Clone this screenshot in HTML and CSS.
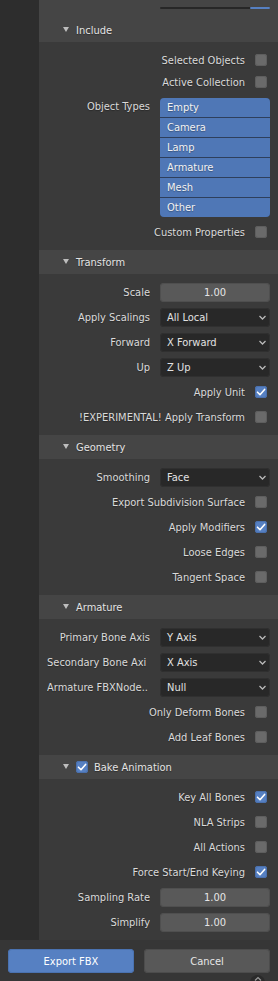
FILE: index.html
```html
<!DOCTYPE html>
<html>
<head>
<meta charset="utf-8">
<link rel="stylesheet" href="styles.css">
</head>
<body>
<div class="app">
  <div class="sidebar"></div>
  <div class="main">
    <div class="topstrip"><div class="topbar"><span class="topbar-fill"></span></div></div>

    <div class="panel-head"><svg class="tri" width="6" height="5" viewBox="0 0 6 5"><polygon points="0,0 6,0 3,5"/></svg><span>Include</span></div>
    <div class="panel panel--tight">
      <div class="crow"><span class="clabel">Selected Objects</span><span class="cb"></span></div>
      <div class="crow"><span class="clabel">Active Collection</span><span class="cb"></span></div>
      <div class="frow frow--list">
        <span class="flabel flabel--top">Object Types</span>
        <div class="list">
          <div class="list-item">Empty</div>
          <div class="list-item">Camera</div>
          <div class="list-item">Lamp</div>
          <div class="list-item">Armature</div>
          <div class="list-item">Mesh</div>
          <div class="list-item">Other</div>
        </div>
      </div>
      <div class="crow"><span class="clabel">Custom Properties</span><span class="cb"></span></div>
    </div>

    <div class="panel-head"><svg class="tri" width="6" height="5" viewBox="0 0 6 5"><polygon points="0,0 6,0 3,5"/></svg><span>Transform</span></div>
    <div class="panel">
      <div class="frow"><span class="flabel">Scale</span><div class="num">1.00</div></div>
      <div class="frow"><span class="flabel">Apply Scalings</span><div class="drop"><span>All Local</span><svg class="chev" width="7" height="5" viewBox="0 0 7 5"><polyline points="0.5,1 3.5,4 6.5,1"/></svg></div></div>
      <div class="frow"><span class="flabel">Forward</span><div class="drop"><span>X Forward</span><svg class="chev" width="7" height="5" viewBox="0 0 7 5"><polyline points="0.5,1 3.5,4 6.5,1"/></svg></div></div>
      <div class="frow"><span class="flabel">Up</span><div class="drop"><span>Z Up</span><svg class="chev" width="7" height="5" viewBox="0 0 7 5"><polyline points="0.5,1 3.5,4 6.5,1"/></svg></div></div>
      <div class="crow"><span class="clabel">Apply Unit</span><span class="cb cb--on"><svg width="12" height="12" viewBox="0 0 12 12"><polyline points="2.5,6.2 5,8.7 9.6,3.4"/></svg></span></div>
      <div class="crow"><span class="clabel">!EXPERIMENTAL! Apply Transform</span><span class="cb"></span></div>
    </div>

    <div class="panel-head"><svg class="tri" width="6" height="5" viewBox="0 0 6 5"><polygon points="0,0 6,0 3,5"/></svg><span>Geometry</span></div>
    <div class="panel">
      <div class="frow"><span class="flabel">Smoothing</span><div class="drop"><span>Face</span><svg class="chev" width="7" height="5" viewBox="0 0 7 5"><polyline points="0.5,1 3.5,4 6.5,1"/></svg></div></div>
      <div class="crow"><span class="clabel">Export Subdivision Surface</span><span class="cb"></span></div>
      <div class="crow"><span class="clabel">Apply Modifiers</span><span class="cb cb--on"><svg width="12" height="12" viewBox="0 0 12 12"><polyline points="2.5,6.2 5,8.7 9.6,3.4"/></svg></span></div>
      <div class="crow"><span class="clabel">Loose Edges</span><span class="cb"></span></div>
      <div class="crow"><span class="clabel">Tangent Space</span><span class="cb"></span></div>
    </div>

    <div class="panel-head"><svg class="tri" width="6" height="5" viewBox="0 0 6 5"><polygon points="0,0 6,0 3,5"/></svg><span>Armature</span></div>
    <div class="panel">
      <div class="frow"><span class="flabel">Primary Bone Axis</span><div class="drop"><span>Y Axis</span><svg class="chev" width="7" height="5" viewBox="0 0 7 5"><polyline points="0.5,1 3.5,4 6.5,1"/></svg></div></div>
      <div class="frow"><span class="flabel flabel--clip">Secondary Bone Axi</span><div class="drop"><span>X Axis</span><svg class="chev" width="7" height="5" viewBox="0 0 7 5"><polyline points="0.5,1 3.5,4 6.5,1"/></svg></div></div>
      <div class="frow"><span class="flabel flabel--clip">Armature FBXNode..</span><div class="drop"><span>Null</span><svg class="chev" width="7" height="5" viewBox="0 0 7 5"><polyline points="0.5,1 3.5,4 6.5,1"/></svg></div></div>
      <div class="crow"><span class="clabel">Only Deform Bones</span><span class="cb"></span></div>
      <div class="crow"><span class="clabel">Add Leaf Bones</span><span class="cb"></span></div>
    </div>

    <div class="panel-head"><svg class="tri" width="6" height="5" viewBox="0 0 6 5"><polygon points="0,0 6,0 3,5"/></svg><span class="cb cb--on cb--head"><svg width="12" height="12" viewBox="0 0 12 12"><polyline points="2.5,6.2 5,8.7 9.6,3.4"/></svg></span><span>Bake Animation</span></div>
    <div class="panel">
      <div class="crow"><span class="clabel">Key All Bones</span><span class="cb cb--on"><svg width="12" height="12" viewBox="0 0 12 12"><polyline points="2.5,6.2 5,8.7 9.6,3.4"/></svg></span></div>
      <div class="crow"><span class="clabel">NLA Strips</span><span class="cb"></span></div>
      <div class="crow"><span class="clabel">All Actions</span><span class="cb"></span></div>
      <div class="crow"><span class="clabel">Force Start/End Keying</span><span class="cb cb--on"><svg width="12" height="12" viewBox="0 0 12 12"><polyline points="2.5,6.2 5,8.7 9.6,3.4"/></svg></span></div>
      <div class="frow"><span class="flabel">Sampling Rate</span><div class="num">1.00</div></div>
      <div class="frow"><span class="flabel">Simplify</span><div class="num">1.00</div></div>
    </div>
  </div>
  <div class="footer">
    <button class="btn btn--primary">Export FBX</button>
    <button class="btn">Cancel</button>
    <span class="corner"><svg width="8" height="5" viewBox="0 0 8 5"><polyline points="1,4.5 4,1.5 7,4.5"/></svg></span>
  </div>
</div>
</body>
</html>
```

FILE: styles.css
```css
* { box-sizing: border-box; }
html, body { margin: 0; padding: 0; }
body {
  width: 278px;
  height: 981px;
  overflow: hidden;
  background: #363636;
  font-family: "DejaVu Sans Condensed", "DejaVu Sans", sans-serif;
  font-stretch: condensed;
  font-size: 11px;
  color: #dadada;
}
.app {
  display: grid;
  grid-template-columns: 39px 239px;
  grid-template-rows: 940px 41px;
  position: relative;
}
.sidebar { background: #2d2d2d; }
.main { background: #3a3a3a; display: flex; flex-direction: column; }
.topstrip {
  height: 18px;
  background: #454545;
  padding: 7px 8px 0 121px;
}
.topbar {
  height: 2px;
  background: #272727;
  border-radius: 1px;
  display: flex;
  justify-content: flex-end;
}
.topbar-fill { width: 20px; background: #5680c2; border-radius: 1px; }

.panel-head {
  height: 24px;
  background: #454545;
  display: flex;
  align-items: center;
  padding-left: 24px;
  color: #e4e4e4;
  text-shadow: 0 1px 1px rgba(0,0,0,0.35);
}
.tri { fill: #bdbdbd; margin-right: 7px; margin-top: -1px; }
.panel {
  display: flex;
  flex-direction: column;
  gap: 5px;
  padding: 8px 8px 8px 8px;
  background: #3a3a3a;
}
.panel--tight { gap: 2px; }
.panel--tight .frow--list { margin: 4px 0 3px; }

.crow {
  height: 20px;
  display: flex;
  align-items: center;
  justify-content: flex-end;
  padding-right: 3px;
  gap: 10px;
}
.clabel { white-space: nowrap; text-shadow: 0 1px 1px rgba(0,0,0,0.3); }
.cb {
  width: 12px;
  height: 12px;
  border-radius: 3px;
  background: #6a6a6a;
  box-shadow: inset 0 0 0 1px #5e5e5e;
  flex: none;
  display: flex;
}
.cb--on { background: #5680c2; box-shadow: inset 0 0 0 1px #4a70ad; }
.cb svg polyline { fill: none; stroke: #ffffff; stroke-width: 1.6; stroke-linecap: round; stroke-linejoin: round; }
.cb--head { margin-right: 6px; }

.frow {
  height: 20px;
  display: grid;
  grid-template-columns: 103px 110px;
  column-gap: 10px;
  align-items: center;
}
.frow--list { height: auto; align-items: start; }
.flabel { text-align: right; white-space: nowrap; overflow: hidden; text-shadow: 0 1px 1px rgba(0,0,0,0.3); }
.flabel--top { line-height: 18px; }
.flabel--clip { text-align: left; }

.num {
  height: 19px;
  border-radius: 4px;
  background: #595959;
  box-shadow: inset 0 0 0 1px #4f4f4f;
  display: flex;
  align-items: center;
  justify-content: center;
  color: #e6e6e6;
}
.drop {
  height: 19px;
  border-radius: 4px;
  background: #282828;
  box-shadow: inset 0 0 0 1px #303030;
  display: flex;
  align-items: center;
  justify-content: space-between;
  padding: 0 4px 0 7px;
  color: #e2e2e2;
}
.chev polyline { fill: none; stroke: #b8b8b8; stroke-width: 1.3; }

.list {
  display: flex;
  flex-direction: column;
  gap: 1px;
  background: #2e3f5c;
  border-radius: 4px;
  overflow: hidden;
}
.list-item {
  height: 19px;
  background: #4f77b6;
  color: #f2f2f2;
  padding-left: 7px;
  line-height: 19px;
  text-shadow: 0 1px 1px rgba(0,0,0,0.3);
}

.footer {
  grid-column: 1 / 3;
  background: #363636;
  display: flex;
  gap: 10px;
  padding: 9px 8px 0 8px;
  position: relative;
}
.btn {
  width: 126px;
  height: 24px;
  border: none;
  border-radius: 4px;
  background: #585858;
  box-shadow: inset 0 0 0 1px #4c4c4c;
  color: #e6e6e6;
  font-family: inherit;
  font-stretch: condensed;
  font-size: 11px;
  padding: 0;
}
.btn--primary { background: #5680c2; box-shadow: inset 0 0 0 1px #4a72b0; color: #ffffff; }
.corner {
  position: absolute;
  left: 250px;
  top: 35px;
  width: 15px;
  height: 15px;
  border-radius: 50%;
  background: #2a2a2a;
  display: flex;
  justify-content: center;
  padding-top: 1px;
}
.corner polyline { fill: none; stroke: #9a9a9a; stroke-width: 1.2; }
```
